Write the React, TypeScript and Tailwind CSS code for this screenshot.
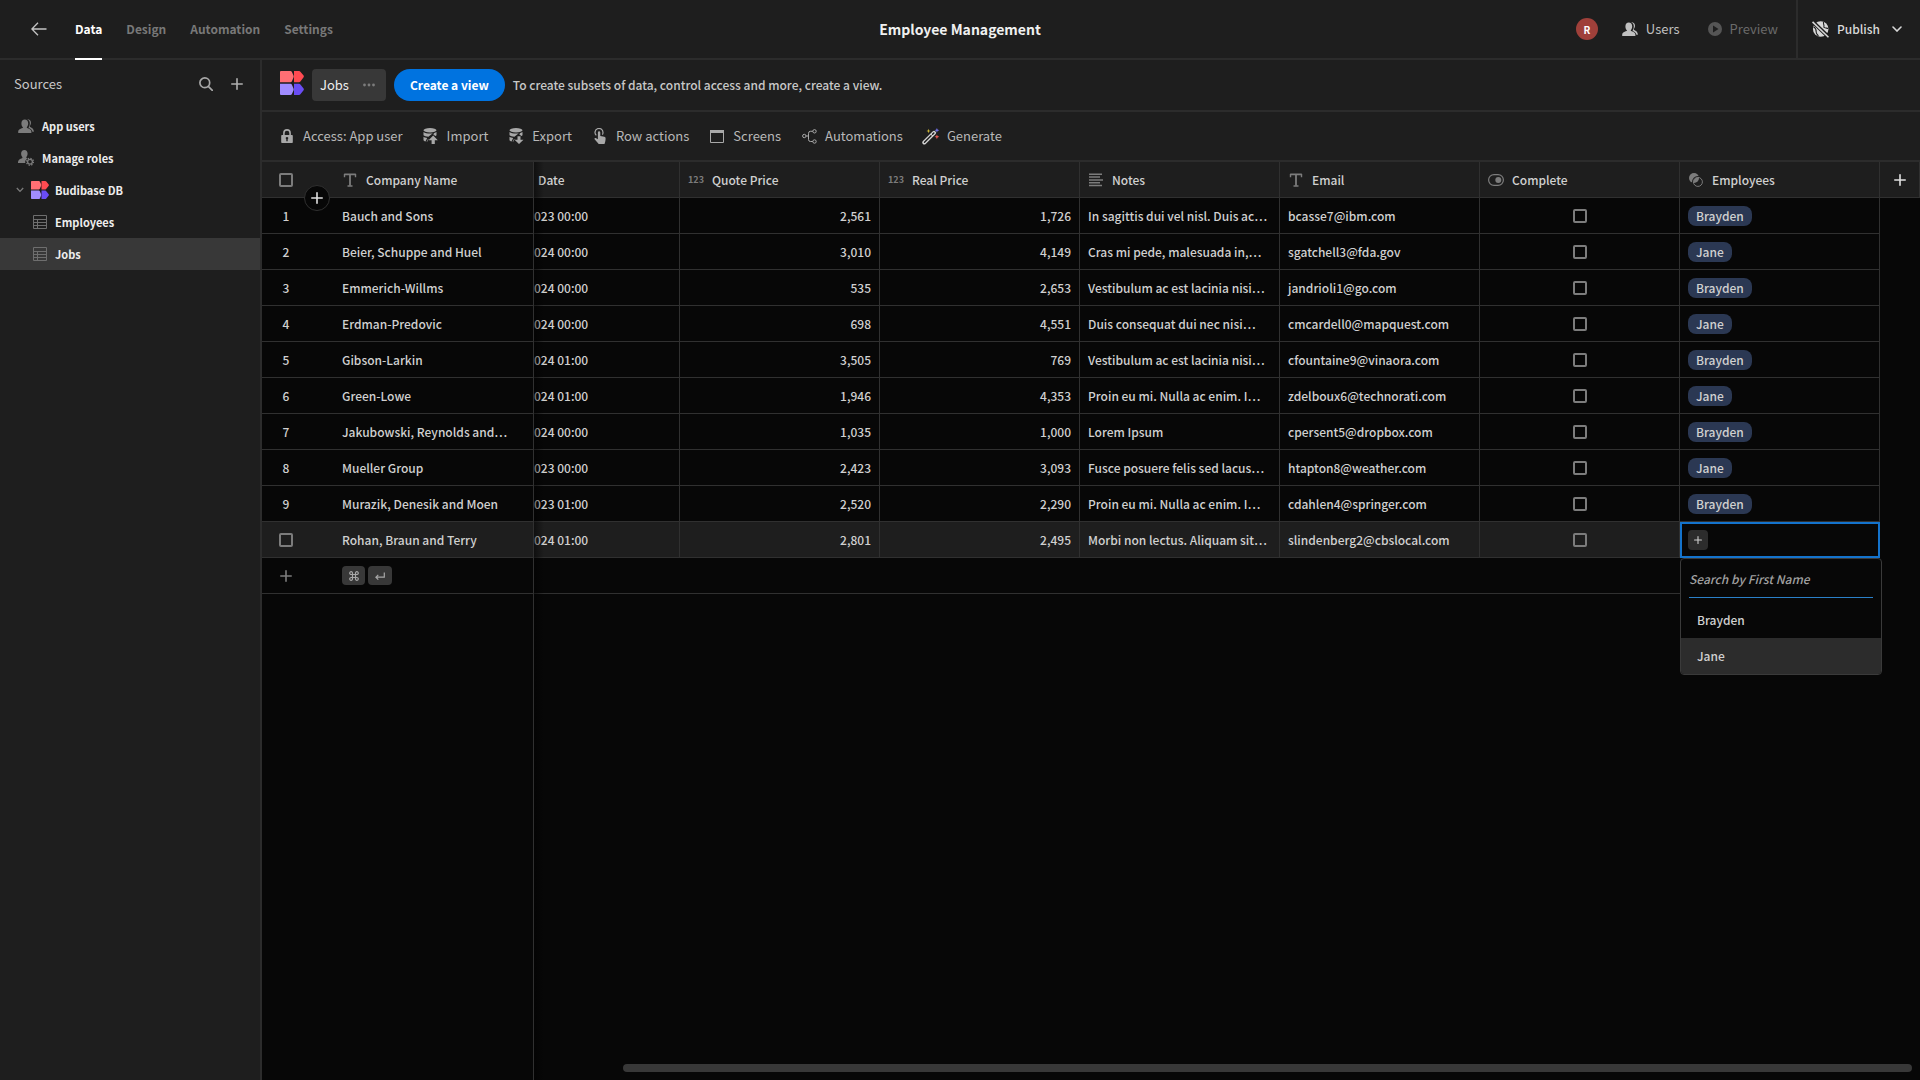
import type { ReactNode } from "react";

type IconProps = { className?: string };

interface Job {
  company: string;
  date: string;
  quote: string;
  real: string;
  notes: string;
  email: string;
  employee?: string;
}

const jobs: Job[] = [
  { company: "Bauch and Sons", date: "023 00:00", quote: "2,561", real: "1,726", notes: "In sagittis dui vel nisl. Duis ac…", email: "bcasse7@ibm.com", employee: "Brayden" },
  { company: "Beier, Schuppe and Huel", date: "024 00:00", quote: "3,010", real: "4,149", notes: "Cras mi pede, malesuada in,…", email: "sgatchell3@fda.gov", employee: "Jane" },
  { company: "Emmerich-Willms", date: "024 00:00", quote: "535", real: "2,653", notes: "Vestibulum ac est lacinia nisi…", email: "jandrioli1@go.com", employee: "Brayden" },
  { company: "Erdman-Predovic", date: "024 00:00", quote: "698", real: "4,551", notes: "Duis consequat dui nec nisi…", email: "cmcardell0@mapquest.com", employee: "Jane" },
  { company: "Gibson-Larkin", date: "024 01:00", quote: "3,505", real: "769", notes: "Vestibulum ac est lacinia nisi…", email: "cfountaine9@vinaora.com", employee: "Brayden" },
  { company: "Green-Lowe", date: "024 01:00", quote: "1,946", real: "4,353", notes: "Proin eu mi. Nulla ac enim. I…", email: "zdelboux6@technorati.com", employee: "Jane" },
  { company: "Jakubowski, Reynolds and…", date: "024 00:00", quote: "1,035", real: "1,000", notes: "Lorem Ipsum", email: "cpersent5@dropbox.com", employee: "Brayden" },
  { company: "Mueller Group", date: "023 00:00", quote: "2,423", real: "3,093", notes: "Fusce posuere felis sed lacus…", email: "htapton8@weather.com", employee: "Jane" },
  { company: "Murazik, Denesik and Moen", date: "023 01:00", quote: "2,520", real: "2,290", notes: "Proin eu mi. Nulla ac enim. I…", email: "cdahlen4@springer.com", employee: "Brayden" },
  { company: "Rohan, Braun and Terry", date: "024 01:00", quote: "2,801", real: "2,495", notes: "Morbi non lectus. Aliquam sit…", email: "slindenberg2@cbslocal.com" },
];

const BudibaseLogo = ({ className }: IconProps) => (
  <svg className={className} viewBox="0 0 24 24" aria-hidden="true">
    <path fill="#ff6f74" d="M0 1a1 1 0 0 1 1-1h9.4c.6 0 1.1.2 1.4.8l1.7 3.6c.3.6.3 1.4 0 2l-1.7 4c-.3.5-.8.8-1.4.8H0z" />
    <path fill="#ff4b52" d="M14 0h5c.6 0 1.1.3 1.4.8l3.2 3.8c.4.5.4 1.2 0 1.7l-3.2 4.1c-.3.5-.8.8-1.4.8h-5z" />
    <path fill="#a08cff" d="M0 12.8h10.4c.6 0 1.1.3 1.4.8l1.7 4c.3.6.3 1.2 0 1.8l-1.7 3.8c-.3.6-.8.8-1.4.8H1a1 1 0 0 1-1-1z" />
    <path fill="#6a4df4" d="M14 12.8h5c.6 0 1.1.3 1.4.8l3.2 4c.4.5.4 1.2 0 1.7l-3.2 3.900c-.3.5-.8.8-1.4.8h-5z" />
  </svg>
);

const PlusIcon = ({ className }: IconProps) => (
  <svg className={className} viewBox="0 0 12 12" stroke="currentColor" strokeWidth="1.6" strokeLinecap="round" aria-hidden="true">
    <path d="M6 .8v10.400M.8 6h10.400" />
  </svg>
);

const UsersIcon = ({ className }: IconProps) => (
  <svg className={className} viewBox="0 0 16 14" fill="currentColor" aria-hidden="true">
    <path d="M6.800.6C8.900.6 10.200 2.200 10.200 4.400c0 1.500-.6 2.800-1.300 3.600-.3.300-.2.900.2 1.100 1.900.8 4.300 1.400 4.300 3.900v1H.2v-1c0-2.500 2.400-3.100 4.300-3.900.5-.2.500-.8.200-1.100-.8-.8-1.300-2.100-1.300-3.600C3.400 2.200 4.700.6 6.800.6z" />
    <path d="M9.600.2c2 0 3.400 1.400 3.400 3.500 0 1.400-.6 2.500-1.100 3.200-.3.400-.1.800.3 1 1.800.8 3.600 1.800 3.700 4.900h-1.500c-.4-2-1.700-2.900-3.500-3.800-.3-.2-.3-.6-.1-.9.700-1 1-2.300 1-3.700C11.800 2.400 11 .9 9.200.2z" />
  </svg>
);

const RolesIcon = ({ className }: IconProps) => (
  <svg className={className} viewBox="0 0 16 16" aria-hidden="true">
    <path fill="currentColor" d="M6.400 0c2 0 3.200 1.500 3.200 3.600 0 1.500-.5 2.600-1.200 3.400-.3.400-.2.900.2 1.100l.6.300A5 5 0 0 0 7.300 13H0v-.9c0-2.400 2.200-3.100 4.100-3.900.4-.2.500-.8.200-1.100-.7-.8-1.200-2-1.200-3.500C3.100 1.500 4.400 0 6.400 0z" />
    <circle cx="12" cy="11.800" r="2.400" fill="none" stroke="currentColor" strokeWidth="1.300" />
    <circle cx="12" cy="11.800" r="3.500" fill="none" stroke="currentColor" strokeWidth="1.300" strokeDasharray="1.370 1.370" />
  </svg>
);

const TableIcon = ({ className }: IconProps) => (
  <svg className={className} viewBox="0 0 14 14" fill="none" stroke="currentColor" aria-hidden="true">
    <path d="M.5.5h13v13H.5zM.5 4.500h13M.5 7.500h13M.5 10.500h13M4.500 4.500v9" />
  </svg>
);

const LockIcon = ({ className }: IconProps) => (
  <svg className={className} viewBox="0 0 12 14" aria-hidden="true">
    <path fill="none" stroke="currentColor" strokeWidth="1.6" d="M2.900 6.500V4a3.100 3.100 0 0 1 6.200 0v2.500" />
    <path fill="currentColor" fillRule="evenodd" d="M1 6h10a.8.8 0 0 1 .8.8v6.400a.8.8 0 0 1-.8.8H1a.8.8 0 0 1-.8-.8V6.800A.8.8 0 0 1 1 6zm5 1.900a1.300 1.300 0 0 0-.7 2.400v2h1.400v-2A1.300 1.300 0 0 0 6 7.900z" />
  </svg>
);

const DataIcon = ({ className, down }: IconProps & { down?: boolean }) => (
  <svg className={className} viewBox="0 0 15 16" fill="currentColor" aria-hidden="true">
    <ellipse cx="7" cy="2.300" rx="6.500" ry="2.200" />
    <path d="M.5 3.900c1.500 1.200 3.800 1.500 6.500 1.500 1 0 1.900 0 2.800-.2L5.400 8.700C3.300 8.500 1.300 8 .5 7.200z" />
    <path d="M11.300 4.900c.9-.2 1.700-.5 2.200-1v3.300c-.3.300-.7.500-1.200.7l-2.100-1.700z" />
    <path d="M.5 8.700c.8.700 2.200 1.100 3.700 1.300l-1.700 3.600c-1.200-.3-2-.9-2-1.500z" />
    {down ? (
      <path d="M8.500 8.300h3v3.500h3L10 16l-4.500-4.200h3z" />
    ) : (
      <path d="M10.200 7.400l4.600 4.800h-3V16H8.600v-3.800h-3z" />
    )}
    <path d="M5 11h.6L4.200 13.800H3.600z" />
  </svg>
);

const TapIcon = ({ className }: IconProps) => (
  <svg className={className} viewBox="0 0 12 16" aria-hidden="true">
    <path fill="none" stroke="currentColor" strokeWidth="1.200" d="M2.300 7.400A4 4 0 1 1 9 4.500c0 .8-.2 1.500-.6 2.100" />
    <path fill="currentColor" d="M3.900 4.500a1.200 1.200 0 0 1 2.400 0v3.400l4 .9c.8.200 1.300.8 1.300 1.600 0 2.200-.5 3.600-1.100 5.600H4.700L.6 11.300c-.5-.6.3-1.500 1.100-1.200l2.200 1.200z" />
  </svg>
);

const ScreenIcon = ({ className }: IconProps) => (
  <svg className={className} viewBox="0 0 14 13" aria-hidden="true">
    <path fill="none" stroke="currentColor" d="M.5.500h13v12H.5z" />
    <path fill="currentColor" d="M0 0h14v3H0z" />
  </svg>
);

const BranchIcon = ({ className }: IconProps) => (
  <svg className={className} viewBox="0 0 15 15" fill="none" stroke="currentColor" aria-hidden="true">
    <circle cx="2.300" cy="7" r="1.700" />
    <circle cx="12.500" cy="2.300" r="1.700" />
    <circle cx="12.500" cy="12.500" r="1.700" />
    <path d="M4 7h2.500M10.800 2.300H8.500a2 2 0 0 0-2 2v6.200a2 2 0 0 0 2 2h2.300" />
  </svg>
);

const WandIcon = ({ className }: IconProps) => (
  <svg className={className} viewBox="0 0 18 17" aria-hidden="true">
    <path d="M2.300 14.500L12 4.800" stroke="#d4d4d4" strokeWidth="4" strokeLinecap="round" />
    <path d="M2.500 14.300L9 7.800M10.600 6.200l1.200-1.200" stroke="#1e1e1e" strokeWidth="1.500" strokeLinecap="round" />
    <path fill="#c9b236" d="M6.500.8l.6 1.600 1.600.6-1.600.6-.6 1.600-.6-1.600-1.600-.6 1.600-.6z" />
    <path fill="#6f6fe0" d="M14.900 0l.7 1.600 1.700.7-1.700.7-.7 1.700-.7-1.700-1.600-.7 1.600-.7z" />
    <path fill="#e0554f" d="M14.900 6.400l.7 1.700 1.700.7-1.700.7-.7 1.700-.7-1.700-1.600-.7 1.600-.7z" />
  </svg>
);

const TextIcon = ({ className }: IconProps) => (
  <svg className={className} viewBox="0 0 14 14" fill="none" stroke="currentColor" aria-hidden="true">
    <path strokeWidth="1.800" d="M1.200 1.300h11.600M7 1.300v11.500" />
    <path strokeWidth="1.400" d="M1.500 1v3.200M12.500 1v3.200M4.500 13h5" />
  </svg>
);

const LinesIcon = ({ className }: IconProps) => (
  <svg className={className} viewBox="0 0 14 14" fill="none" stroke="currentColor" strokeWidth="1.500" aria-hidden="true">
    <path d="M0 1.300h13M0 4.100h11M0 6.900h14M0 9.700h11M0 12.500h13" />
  </svg>
);

const ToggleIcon = ({ className }: IconProps) => (
  <svg className={className} viewBox="0 0 16 14" aria-hidden="true">
    <rect x=".6" y="1.600" width="14.800" height="10.800" rx="5.400" fill="none" stroke="currentColor" strokeWidth="1.200" />
    <circle cx="10.300" cy="7" r="3" fill="currentColor" />
  </svg>
);

const LinkIcon = ({ className }: IconProps) => (
  <svg className={className} viewBox="0 0 14 14" aria-hidden="true">
    <circle cx="5" cy="5" r="5" fill="currentColor" />
    <circle cx="8.900" cy="8.900" r="5" fill="none" stroke="#1e1e1e" strokeWidth="1.800" />
    <circle cx="8.900" cy="8.900" r="4.500" fill="none" stroke="currentColor" strokeWidth="1" />
  </svg>
);

const GlobeOffIcon = ({ className }: IconProps) => (
  <svg className={className} viewBox="0 0 16 16" aria-hidden="true">
    <circle cx="8.200" cy="7.600" r="7.300" fill="currentColor" />
    <path fill="none" stroke="#1e1e1e" strokeWidth="1" d="M1.500 5.500c2 1 2.500 3 2.500 5s1.500 2 2 4M11 .8c-1 1.700.7 2.500.2 4.200s2 1.500 4 2" />
    <path stroke="#1e1e1e" strokeWidth="3.600" d="M0 0l16 15.500" />
    <path stroke="currentColor" strokeWidth="1.500" d="M.5.800l15 14.500" />
  </svg>
);

const Checkbox = ({ label }: { label: string }) => (
  <input
    type="checkbox"
    aria-label={label}
    className="block size-3.5 shrink-0 appearance-none rounded-xs border-2 border-[#7c7c7c] bg-transparent"
  />
);

const navItems = ["Design", "Automation", "Settings"];

const TopBar = () => (
  <header className="flex h-[60px] shrink-0 items-stretch border-b-2 border-[#2c2c2c]">
    <nav className="flex flex-1 items-stretch gap-6 text-xs font-bold text-[#787878]">
      <a href="#apps" aria-label="Back" className="mr-1 ml-[31px] flex items-center text-[#c4c4c4]">
        <svg className="h-3.5 w-4" viewBox="0 0 16 14" fill="none" stroke="currentColor" strokeWidth="1.300" aria-hidden="true">
          <path d="M7 .8L.9 7 7 13.200M.9 7h14.600" />
        </svg>
      </a>
      <a href="#data" className="-mb-0.5 flex items-center border-b-2 border-white text-white">
        Data
      </a>
      {navItems.map((item) => (
        <a key={item} href={`#${item.toLowerCase()}`} className="flex items-center">
          {item}
        </a>
      ))}
    </nav>
    <h1 className="flex items-center text-sm font-bold text-[#f0f0f0]">Employee Management</h1>
    <div className="flex flex-1 items-stretch justify-end text-[13px]">
      <div className="flex items-center gap-6 pr-[18px]">
        <span className="flex size-[22px] items-center justify-center rounded-full bg-[#9f403a] text-[10px] font-bold text-white">
          R
        </span>
        <button className="flex items-center gap-2 text-[#c0c0c0]">
          <UsersIcon className="h-3.5 w-4" />
          Users
        </button>
        <button className="ml-1 flex items-center gap-2 text-[#6a6a6a]">
          <svg className="size-3.5" viewBox="0 0 14 14" aria-hidden="true">
            <circle cx="7" cy="7" r="7" fill="#555555" />
            <path d="M5 3.500l5.500 3.500L5 10.500z" fill="#1e1e1e" />
          </svg>
          Preview
        </button>
      </div>
      <button className="flex items-center gap-2 border-l-2 border-[#2c2c2c] pr-[18px] pl-3.5 text-xs font-medium text-[#d8d8d8]">
        <GlobeOffIcon className="size-[17px]" />
        Publish
        <svg className="ml-1 h-1.5 w-2.5" viewBox="0 0 10 6" fill="none" stroke="currentColor" strokeWidth="1.600" strokeLinecap="round" aria-hidden="true">
          <path d="M1 1l4 4 4-4" />
        </svg>
      </button>
    </div>
  </header>
);

const Sidebar = () => (
  <aside className="flex w-[262px] shrink-0 flex-col border-r-2 border-[#2c2c2c]">
    <div className="flex h-12 items-center pr-[17px] pl-3.5">
      <h2 className="flex-1 text-[13px] text-[#c8c8c8]">Sources</h2>
      <button aria-label="Search sources" className="mr-[18px] text-[#a8a8a8]">
        <svg className="size-3.5" viewBox="0 0 14 14" fill="none" stroke="currentColor" strokeWidth="1.700" aria-hidden="true">
          <circle cx="5.800" cy="5.800" r="4.900" />
          <path d="M9.300 9.300l4 4" strokeLinecap="round" />
        </svg>
      </button>
      <button aria-label="Add source" className="text-[#b0b0b0]">
        <PlusIcon className="size-3" />
      </button>
    </div>
    <ul className="pt-0.5 text-[11px] font-bold text-[#ededed]">
      <li>
        <a href="#users" className="flex h-8 items-center gap-2 pl-[18px]">
          <UsersIcon className="h-3.5 w-4 text-[#7c7c7c]" />
          App users
        </a>
      </li>
      <li>
        <a href="#roles" className="flex h-8 items-center gap-2 pl-[18px]">
          <RolesIcon className="size-4 text-[#7c7c7c]" />
          Manage roles
        </a>
      </li>
      <li>
        <a href="#budibase-db" className="flex h-8 items-center pl-4">
          <svg className="mr-[7px] h-1.5 w-2" viewBox="0 0 8 6" fill="none" stroke="#7c7c7c" strokeWidth="1.300" aria-hidden="true">
            <path d="M.8 1L4 4.400 7.200 1" />
          </svg>
          <BudibaseLogo className="mr-1.5 size-[18px]" />
          Budibase DB
        </a>
      </li>
      <li>
        <a href="#employees" className="flex h-8 items-center gap-2 pl-[33px]">
          <TableIcon className="size-3.5 text-[#6e6e6e]" />
          Employees
        </a>
      </li>
      <li>
        <a href="#jobs" className="flex h-8 items-center gap-2 bg-[#383838] pl-[33px]">
          <TableIcon className="size-3.5 text-[#6e6e6e]" />
          Jobs
        </a>
      </li>
    </ul>
  </aside>
);

const ViewBar = () => (
  <div className="flex h-[52px] shrink-0 items-center border-b-2 border-[#2c2c2c] pl-[18px]">
    <BudibaseLogo className="mr-2 mb-1 size-6" />
    <button className="mr-2 flex h-8 items-center gap-3.5 rounded-sm bg-[#383838] pr-[11px] pl-2 text-[13px] text-[#eeeeee]">
      Jobs
      <svg className="h-1 w-3" viewBox="0 0 12 4" fill="#7c7c7c" aria-hidden="true">
        <circle cx="1.500" cy="2" r="1.400" />
        <circle cx="6" cy="2" r="1.400" />
        <circle cx="10.500" cy="2" r="1.400" />
      </svg>
    </button>
    <button className="mr-2 h-8 rounded-full bg-[#0073e0] px-4 text-xs font-bold text-white">
      Create a view
    </button>
    <p className="text-xs font-medium text-[#c8c8c8]">To create subsets of data, control access and more, create a view.</p>
  </div>
);

const ToolButton = ({ icon, children }: { icon: ReactNode; children: ReactNode }) => (
  <button className="flex items-center gap-2">
    <span className="flex w-4 justify-center text-[#a8a8a8]">{icon}</span>
    {children}
  </button>
);

const Toolbar = () => (
  <div className="flex h-[50px] shrink-0 items-center gap-5 border-b-2 border-[#2c2c2c] pl-[17px] text-[13px] text-[#b8b8b8]">
    <ToolButton icon={<LockIcon className="h-3.5 w-3" />}>Access: App user</ToolButton>
    <ToolButton icon={<DataIcon className="h-4 w-[15px]" />}>Import</ToolButton>
    <ToolButton icon={<DataIcon className="h-4 w-[15px]" down />}>Export</ToolButton>
    <ToolButton icon={<TapIcon className="h-4 w-3" />}>Row actions</ToolButton>
    <ToolButton icon={<ScreenIcon className="h-[13px] w-3.5" />}>Screens</ToolButton>
    <ToolButton icon={<BranchIcon className="size-[15px]" />}>Automations</ToolButton>
    <ToolButton icon={<WandIcon className="h-[17px] w-[18px] shrink-0" />}>Generate</ToolButton>
  </div>
);

const HeaderCell = ({ icon, children }: { icon: ReactNode; children: ReactNode }) => (
  <th className="border-r border-b border-[#303030] px-2 font-medium">
    <div className="flex items-center gap-2">
      <span className="flex w-4 justify-center text-[#7c7c7c]">{icon}</span>
      {children}
    </div>
  </th>
);

const NumberIcon = () => <span className="text-[9px] font-bold">123</span>;

const EmployeePicker = () => (
  <div className="absolute top-full -left-0.5 z-10 mt-0.5 w-[202px] overflow-hidden rounded-sm border border-[#3a3a3a] bg-[#070707]">
    <div className="mx-2 border-b border-[#2a80c8]">
      <input
        type="text"
        aria-label="Search by First Name"
        placeholder="Search by First Name"
        className="block h-[38px] w-full bg-transparent text-xs italic outline-none placeholder:text-[#a0a0a0]"
      />
    </div>
    <ul className="pt-1">
      <li>
        <button className="flex h-9 w-full items-center px-4">Brayden</button>
      </li>
      <li>
        <button className="flex h-9 w-full items-center bg-[#2c2c2c] px-4">Jane</button>
      </li>
    </ul>
  </div>
);

const Grid = () => (
  <div className="relative flex min-h-0 flex-1 flex-col bg-[#070707]">
    <table className="w-full table-fixed border-separate border-spacing-0 text-left text-xs font-medium text-[#d0d0d0]">
      <colgroup>
        <col className="w-[72px]" />
        <col className="w-[200px]" />
        <col />
        <col className="w-[200px]" />
        <col className="w-[200px]" />
        <col className="w-[200px]" />
        <col className="w-[200px]" />
        <col className="w-[200px]" />
        <col className="w-[200px]" />
        <col className="w-10" />
      </colgroup>
      <thead>
        <tr className="h-9 bg-[#1e1e1e]">
          <th className="relative border-b border-[#303030] pl-[17px]">
            <Checkbox label="Select all rows" />
            <button
              aria-label="Insert row"
              className="absolute top-[23px] left-[42px] z-10 flex size-[26px] items-center justify-center rounded-full border border-[#303030] bg-[#070707] text-[#e0e0e0]"
            >
              <PlusIcon className="size-3" />
            </button>
          </th>
          <HeaderCell icon={<TextIcon className="size-3.5" />}>Company Name</HeaderCell>
          <th className="border-r border-b border-[#303030] pl-1 font-medium">Date</th>
          <HeaderCell icon={<NumberIcon />}>Quote Price</HeaderCell>
          <HeaderCell icon={<NumberIcon />}>Real Price</HeaderCell>
          <HeaderCell icon={<LinesIcon className="size-3.5" />}>Notes</HeaderCell>
          <HeaderCell icon={<TextIcon className="size-3.5" />}>Email</HeaderCell>
          <HeaderCell icon={<ToggleIcon className="h-3.5 w-4" />}>Complete</HeaderCell>
          <HeaderCell icon={<LinkIcon className="size-3.5" />}>Employees</HeaderCell>
          <th className="border-r border-b border-[#303030]">
            <button aria-label="Add column" className="mx-auto block text-[#e0e0e0]">
              <PlusIcon className="size-3" />
            </button>
          </th>
        </tr>
      </thead>
      <tbody>
        {jobs.map((job, index) => {
          const cell = `h-9 border-b border-r border-[#303030] px-2 whitespace-nowrap ${job.employee ? "" : "bg-[#1e1e1e]"}`;
          return (
            <tr key={job.company}>
              <td className={`h-9 border-b border-[#303030] ${job.employee ? "" : "bg-[#1e1e1e]"}`}>
                <div className="flex w-12 justify-center">
                  {job.employee ? index + 1 : <Checkbox label={`Select ${job.company}`} />}
                </div>
              </td>
              <td className={cell}>{job.company}</td>
              <td className={`h-9 overflow-hidden border-r border-b border-[#303030] whitespace-nowrap ${job.employee ? "" : "bg-[#1e1e1e]"}`}>
                {job.date}
              </td>
              <td className={`${cell} text-right`}>{job.quote}</td>
              <td className={`${cell} text-right`}>{job.real}</td>
              <td className={cell}>{job.notes}</td>
              <td className={cell}>{job.email}</td>
              <td className={cell}>
                <div className="flex justify-center">
                  <Checkbox label={`${job.company} complete`} />
                </div>
              </td>
              {job.employee ? (
                <td className={cell}>
                  <span className="inline-flex h-5 items-center rounded-lg bg-[#2b3853] px-2 align-middle">{job.employee}</span>
                </td>
              ) : (
                <td className="relative h-9 border-2 border-[#1473cc] px-1.5">
                  <button aria-label="Link employee" className="flex size-5 items-center justify-center rounded-sm bg-[#2c2c2c]">
                    <PlusIcon className="size-2" />
                  </button>
                  <EmployeePicker />
                </td>
              )}
              <td />
            </tr>
          );
        })}
        <tr>
          <td className="h-9 border-b border-[#303030]">
            <button aria-label="Add row" className="flex w-12 justify-center text-[#7c7c7c]">
              <PlusIcon className="size-3" />
            </button>
          </td>
          <td className="border-r border-b border-[#303030] px-2">
            <div className="flex gap-[3px] text-[#a8a8a8]">
              <kbd className="flex h-[19px] w-[23px] items-center justify-center rounded-sm bg-[#383838]">
                <svg className="size-2.5" viewBox="0 0 10 10" fill="none" stroke="currentColor" strokeWidth="1.200" aria-label="Command">
                  <path d="M3.500 3.500h3v3h-3zM3.500 3.500H2.200a1.400 1.400 0 1 1 1.300-1.300zM6.500 3.500V2.200a1.400 1.400 0 1 1 1.300 1.300zM6.500 6.500h1.300a1.400 1.400 0 1 1-1.300 1.300zM3.500 6.500v1.300a1.400 1.400 0 1 1-1.300-1.300z" />
                </svg>
              </kbd>
              <kbd className="flex h-[19px] w-6 items-center justify-center rounded-sm bg-[#383838]">
                <svg className="h-2 w-2.5" viewBox="0 0 10 8" fill="none" stroke="currentColor" strokeWidth="1.200" aria-label="Enter">
                  <path d="M9.300.5v4.700H1M3.300 2.800L.9 5.200l2.400 2.400" />
                </svg>
              </kbd>
            </div>
          </td>
          <td colSpan={7} className="border-b border-[#303030]" />
          <td />
        </tr>
      </tbody>
    </table>
    <div className="w-[272px] flex-1 border-r border-[#303030]" />
    <div className="pointer-events-none absolute inset-y-0 left-[272px] w-2.5 bg-linear-to-r from-black/50 to-transparent" />
    <div className="absolute right-2 bottom-2 left-[361px] h-2 rounded-full bg-[#383838]" />
  </div>
);

export default function App() {
  return (
    <div className="flex h-screen flex-col overflow-hidden bg-[#1e1e1e] font-['Noto_Sans_CJK_SC',sans-serif]">
      <TopBar />
      <div className="flex min-h-0 flex-1">
        <Sidebar />
        <main className="flex min-w-0 flex-1 flex-col">
          <ViewBar />
          <Toolbar />
          <Grid />
        </main>
      </div>
    </div>
  );
}
